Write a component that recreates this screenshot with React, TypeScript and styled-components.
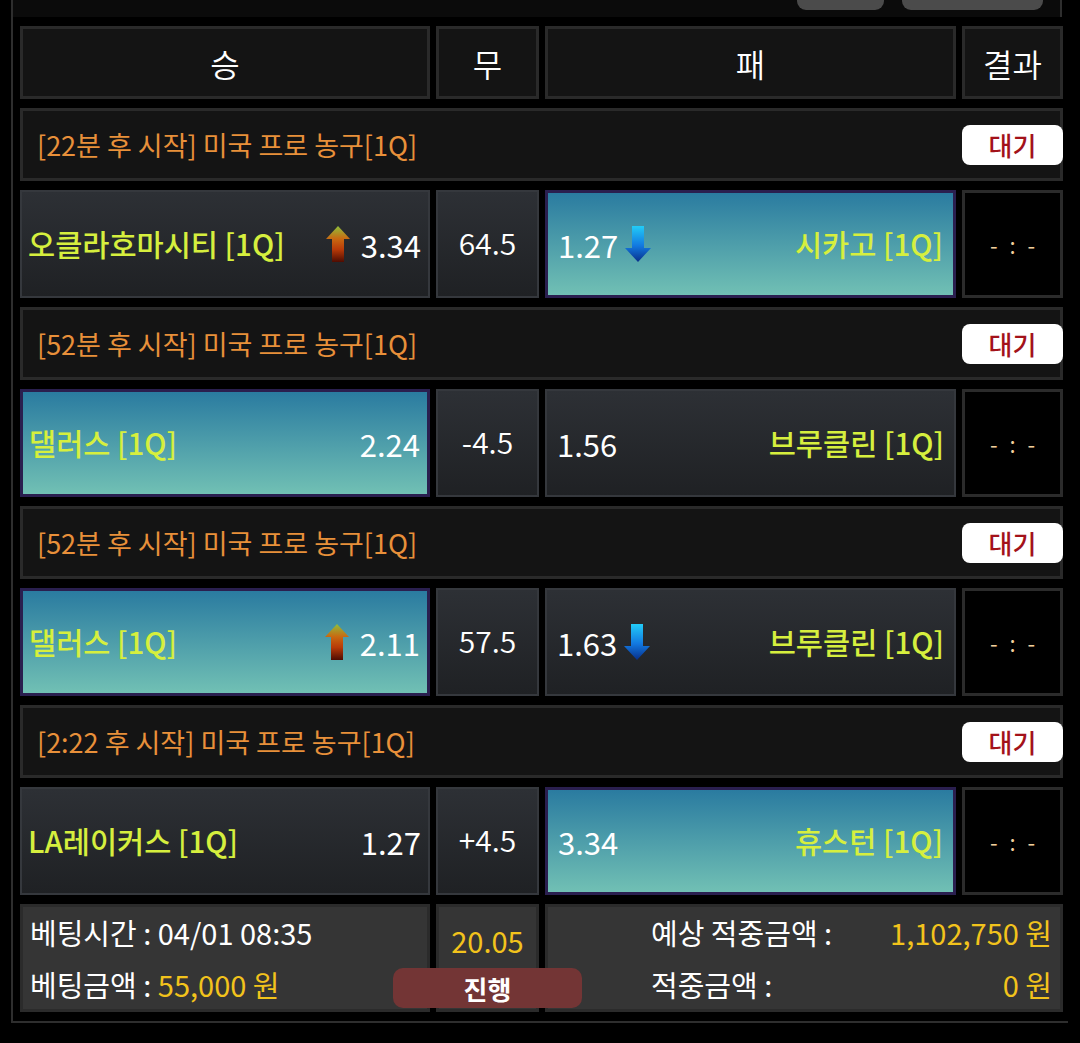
import React from 'react';
import styled, { createGlobalStyle, css } from 'styled-components';

const GlobalStyle = createGlobalStyle`
  * { box-sizing: border-box; }
  body {
    margin: 0;
    background: #000;
    font-family: "Noto Sans CJK KR", "Noto Sans", sans-serif;
  }
`;

const Page = styled.div`
  width: 1080px;
  height: 1043px;
  background: #000;
  overflow: hidden;
`;

const Frame = styled.div`
  margin-left: 11px;
  width: 1057px;
  border-left: 2px solid #2e2e2e;
  border-bottom: 2px solid #2e2e2e;
  padding: 0 5px 9px 7px;
  display: flex;
  flex-direction: column;
  gap: 9px;
`;

const Toolbar = styled.div`
  height: 17px;
  margin: 0 1px 0 -7px;
  background: #0b0b0b;
  border-right: 2px solid #2e2e2e;
  display: flex;
  justify-content: flex-end;
  gap: 18px;
  padding-right: 17px;
`;

const ToolButton = styled.div<{ $w: number }>`
  width: ${(p) => p.$w}px;
  height: 10px;
  background: #4b4b4b;
  border-radius: 0 0 9px 9px;
`;

const Row = styled.div<{ $h: number }>`
  display: grid;
  grid-template-columns: 410px 103px 411px 101px;
  column-gap: 6px;
  height: ${(p) => p.$h}px;
`;

const FooterRow = styled.div`
  position: relative;
  display: grid;
  grid-template-columns: 410px 103px 1fr;
  column-gap: 6px;
  height: 108px;
`;

const HeadCell = styled.div`
  background: #141414;
  border: 3px solid #2a2a2a;
  color: #fff;
  font-size: 32px;
  font-weight: 350;
  line-height: 1;
  display: flex;
  align-items: center;
  justify-content: center;
`;

const LeagueBar = styled.div`
  height: 73px;
  background: #141414;
  border: 3px solid #2a2a2a;
  display: flex;
  align-items: center;
  justify-content: space-between;
  padding-left: 14px;
  color: #e8903a;
  font-size: 27px;
  line-height: 1;
`;

const WaitBadge = styled.div`
  width: 101px;
  height: 40px;
  margin-right: -3px;
  background: #fff;
  border-radius: 8px;
  color: #a3121a;
  font-size: 26px;
  font-weight: 500;
  display: flex;
  align-items: center;
  justify-content: center;
`;

const plainCell = css`
  border: 2px solid #35383d;
  background: linear-gradient(#2d3035, #1f2124);
`;

const TeamCell = styled.div<{ $selected: boolean; $side: 'home' | 'away' }>`
  display: flex;
  align-items: center;
  justify-content: space-between;
  line-height: 1;
  padding: ${(p) => (p.$side === 'home' ? '0 7px 0 6px' : '0 10px 0 10px')};
  ${plainCell}
  ${(p) =>
    p.$selected &&
    css`
      border: 3px solid #2a1f4f;
      background: linear-gradient(#2a7ba0, #71c0b4);
    `}
`;

const TeamName = styled.span`
  color: #d6ef3e;
  font-size: 29.5px;
  font-weight: 500;
`;

const OddsGroup = styled.div<{ $gap: number }>`
  display: flex;
  align-items: center;
  gap: ${(p) => p.$gap}px;
`;

const Odds = styled.span`
  color: #fff;
  font-size: 31px;
  font-weight: 400;
`;

const MidCell = styled.div`
  ${plainCell}
  color: #fff;
  font-size: 30px;
  font-weight: 350;
  line-height: 1;
  display: flex;
  align-items: center;
  justify-content: center;
  padding-bottom: 4px;
`;

const ResultCell = styled.div`
  background: #000;
  border: 3px solid #2b2b2b;
  color: #f0cf9c;
  font-size: 22px;
  word-spacing: 7px;
  display: flex;
  align-items: center;
  justify-content: center;
`;

const FooterCell = styled.div`
  background: #353535;
  border: 3px solid #2b2b2b;
  color: #fff;
  font-size: 29px;
  line-height: 1;
`;

const InfoList = styled(FooterCell)`
  display: flex;
  flex-direction: column;
  justify-content: center;
  gap: 23px;
  padding-left: 7px;
`;

const Rate = styled(FooterCell)`
  display: flex;
  justify-content: center;
  padding-top: 19px;
  color: #f2c31c;
`;

const Totals = styled(FooterCell)`
  display: grid;
  grid-template-columns: auto 1fr;
  align-content: center;
  row-gap: 23px;
  padding: 0 8px 0 103px;
`;

const Value = styled.span<{ $right?: boolean }>`
  color: #f2c31c;
  text-align: ${(p) => (p.$right ? 'right' : 'left')};
`;

const GoButton = styled.div`
  position: absolute;
  left: 373px;
  top: 64px;
  width: 189px;
  height: 40px;
  background: #733535;
  border-radius: 10px;
  color: #fff;
  font-size: 26px;
  font-weight: 700;
  display: flex;
  align-items: center;
  justify-content: center;
`;

const UpArrow = () => (
  <svg width="24" height="36" viewBox="0 0 24 36">
    <defs>
      <linearGradient id="upGrad" x1="0" y1="0" x2="0" y2="1">
        <stop offset="0" stopColor="#8fbf3a" />
        <stop offset="0.35" stopColor="#c86a12" />
        <stop offset="0.65" stopColor="#b83a08" />
        <stop offset="1" stopColor="#4e0c02" />
      </linearGradient>
    </defs>
    <path d="M12 0 L24 13 L18 13 L18 36 L6 36 L6 13 L0 13 Z" fill="url(#upGrad)" />
  </svg>
);

const DownArrow = () => (
  <svg width="26" height="36" viewBox="0 0 26 36">
    <defs>
      <linearGradient id="downGrad" x1="0" y1="0" x2="0" y2="1">
        <stop offset="0" stopColor="#22ccf8" />
        <stop offset="0.55" stopColor="#1278e0" />
        <stop offset="1" stopColor="#082f8a" />
      </linearGradient>
    </defs>
    <path d="M7 0 L19 0 L19 22 L26 22 L13 36 L0 22 L7 22 Z" fill="url(#downGrad)" />
  </svg>
);

type Trend = 'up' | 'down' | null;

type Match = {
  league: string;
  home: string;
  homeOdds: string;
  homeTrend: Trend;
  line: string;
  away: string;
  awayOdds: string;
  awayTrend: Trend;
  pick: 'home' | 'away';
};

const matches: Match[] = [
  {
    league: '[22분 후 시작] 미국 프로 농구[1Q]',
    home: '오클라호마시티 [1Q]',
    homeOdds: '3.34',
    homeTrend: 'up',
    line: '64.5',
    away: '시카고 [1Q]',
    awayOdds: '1.27',
    awayTrend: 'down',
    pick: 'away',
  },
  {
    league: '[52분 후 시작] 미국 프로 농구[1Q]',
    home: '댈러스 [1Q]',
    homeOdds: '2.24',
    homeTrend: null,
    line: '-4.5',
    away: '브루클린 [1Q]',
    awayOdds: '1.56',
    awayTrend: null,
    pick: 'home',
  },
  {
    league: '[52분 후 시작] 미국 프로 농구[1Q]',
    home: '댈러스 [1Q]',
    homeOdds: '2.11',
    homeTrend: 'up',
    line: '57.5',
    away: '브루클린 [1Q]',
    awayOdds: '1.63',
    awayTrend: 'down',
    pick: 'home',
  },
  {
    league: '[2:22 후 시작] 미국 프로 농구[1Q]',
    home: 'LA레이커스 [1Q]',
    homeOdds: '1.27',
    homeTrend: null,
    line: '+4.5',
    away: '휴스턴 [1Q]',
    awayOdds: '3.34',
    awayTrend: null,
    pick: 'away',
  },
];

const TrendIcon = ({ trend }: { trend: Trend }) => {
  if (trend === 'up') return <UpArrow />;
  if (trend === 'down') return <DownArrow />;
  return null;
};

const MatchBlock = ({ m }: { m: Match }) => (
  <>
    <LeagueBar>
      <span>{m.league}</span>
      <WaitBadge>대기</WaitBadge>
    </LeagueBar>
    <Row $h={108}>
      <TeamCell $side="home" $selected={m.pick === 'home'}>
        <TeamName>{m.home}</TeamName>
        <OddsGroup $gap={11}>
          <TrendIcon trend={m.homeTrend} />
          <Odds>{m.homeOdds}</Odds>
        </OddsGroup>
      </TeamCell>
      <MidCell>{m.line}</MidCell>
      <TeamCell $side="away" $selected={m.pick === 'away'}>
        <OddsGroup $gap={7}>
          <Odds>{m.awayOdds}</Odds>
          <TrendIcon trend={m.awayTrend} />
        </OddsGroup>
        <TeamName>{m.away}</TeamName>
      </TeamCell>
      <ResultCell>- : -</ResultCell>
    </Row>
  </>
);

export default function App() {
  return (
    <Page>
      <GlobalStyle />
      <Frame>
        <Toolbar>
          <ToolButton $w={87} />
          <ToolButton $w={141} />
        </Toolbar>
        <Row $h={73}>
          <HeadCell>승</HeadCell>
          <HeadCell>무</HeadCell>
          <HeadCell>패</HeadCell>
          <HeadCell>결과</HeadCell>
        </Row>
        {matches.map((m, i) => (
          <MatchBlock key={i} m={m} />
        ))}
        <FooterRow>
          <InfoList>
            <div>베팅시간 : 04/01 08:35</div>
            <div>
              베팅금액 : <Value>55,000 원</Value>
            </div>
          </InfoList>
          <Rate>20.05</Rate>
          <Totals>
            <span>예상 적중금액 :</span>
            <Value $right>1,102,750 원</Value>
            <span>적중금액 :</span>
            <Value $right>0 원</Value>
          </Totals>
          <GoButton>진행</GoButton>
        </FooterRow>
      </Frame>
    </Page>
  );
}
